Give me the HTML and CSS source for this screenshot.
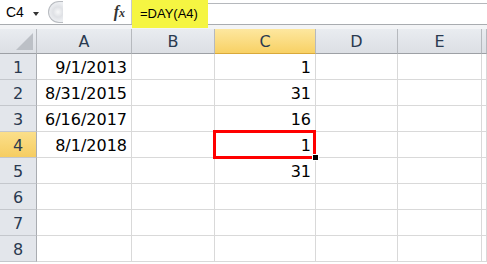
FILE: index.html
```html
<!DOCTYPE html>
<html lang="en">
<head>
    <meta charset="UTF-8">
    <title>DAY function</title>
    <link rel="stylesheet" href="styles.css">
</head>
<body>
    <div class="formula-bar">
        <div class="name-box">C4<span class="arrow"></span></div>
        <div class="knob"></div>
        <div class="fx">f<span>x</span></div>
        <div class="formula">=DAY(A4)</div>
        <div class="formula-rest"></div>
    </div>
    <div class="strip"></div>

    <div class="sheet">
        <div class="hd corner"><span class="tri"></span></div>
        <div class="hd">A</div>
        <div class="hd">B</div>
        <div class="hd active">C</div>
        <div class="hd">D</div>
        <div class="hd">E</div>
        <div class="hd"></div>

        <div class="rh">1</div><div class="c">9/1/2013</div><div class="c"></div><div class="c">1</div><div class="c"></div><div class="c"></div><div class="c"></div>
        <div class="rh">2</div><div class="c">8/31/2015</div><div class="c"></div><div class="c">31</div><div class="c"></div><div class="c"></div><div class="c"></div>
        <div class="rh">3</div><div class="c">6/16/2017</div><div class="c"></div><div class="c">16</div><div class="c"></div><div class="c"></div><div class="c"></div>
        <div class="rh active">4</div><div class="c">8/1/2018</div><div class="c"></div><div class="c selected">1<span class="handle"></span></div><div class="c"></div><div class="c"></div><div class="c"></div>
        <div class="rh">5</div><div class="c"></div><div class="c"></div><div class="c">31</div><div class="c"></div><div class="c"></div><div class="c"></div>
        <div class="rh">6</div><div class="c"></div><div class="c"></div><div class="c"></div><div class="c"></div><div class="c"></div><div class="c"></div>
        <div class="rh">7</div><div class="c"></div><div class="c"></div><div class="c"></div><div class="c"></div><div class="c"></div><div class="c"></div>
        <div class="rh">8</div><div class="c"></div><div class="c"></div><div class="c"></div><div class="c"></div><div class="c"></div><div class="c"></div>
    </div>
</body>
</html>
```

FILE: styles.css
```css
body {
    margin: 0;
    width: 487px;
    height: 264px;
    overflow: hidden;
    background: #fff;
    font-family: "DejaVu Sans", sans-serif;
}
.formula-bar {
    display: flex;
    height: 25px;
    box-sizing: border-box;
    border-bottom: 1px solid #a9acb0;
    background: #fff;
}
.name-box {
    width: 46px;
    display: flex;
    align-items: center;
    padding-left: 6px;
    box-sizing: border-box;
    font-family: "Liberation Sans", sans-serif;
    font-size: 14px;
    color: #000;
    position: relative;
}
.arrow {
    position: absolute;
    left: 33px;
    top: 12px;
    border-left: 3px solid transparent;
    border-right: 3px solid transparent;
    border-top: 4px solid #333;
}
.knob {
    width: 14px;
    margin: 1px 0 1px 2px;
    border-radius: 11px 0 0 11px;
    border: 1px solid #b9bcc1;
    border-right: none;
    background: radial-gradient(circle at 9px 10px, #f7f8f9 0, #dfe1e5 5px, #eceef1 9px);
}
.fx {
    width: 69px;
    box-sizing: border-box;
    text-align: right;
    padding-right: 6px;
    padding-top: 3px;
    font-family: "Liberation Serif", serif;
    font-style: italic;
    font-weight: bold;
    font-size: 16px;
    color: #333;
    border-right: 1px solid #c7c9cc;
}
.fx span {
    font-size: 12px;
}
.formula {
    width: 76px;
    margin-bottom: -4px;
    background: #f5f542;
    font-family: "Liberation Sans", sans-serif;
    font-size: 13px;
    padding: 6px 0 0 8px;
    box-sizing: border-box;
    color: #000;
}
.formula-rest {
    flex: 1;
    border-top: 1px solid #b5b8bc;
    margin-top: 3px;
}
.strip {
    height: 4px;
    background: #f3f4f6;
}
.sheet {
    display: grid;
    grid-template-columns: 37px 95px 83px 101px 82px 84px 5px;
    grid-template-rows: 25px repeat(8, 26px);
    font-size: 16px;
}
.hd {
    box-sizing: border-box;
    background: linear-gradient(#e9ecf0, #dcdfe4);
    border-right: 1px solid #b6b9be;
    border-bottom: 1px solid #9da0a5;
    color: #2a3a50;
    display: flex;
    align-items: center;
    justify-content: center;
    padding-top: 1px;
}
.hd.active {
    background: linear-gradient(#fde79f, #f8d165);
    border-bottom-color: #d9a93b;
}
.corner {
    position: relative;
}
.tri {
    position: absolute;
    right: 3px;
    bottom: 3px;
    border-left: 17px solid transparent;
    border-bottom: 17px solid #bcc0c6;
}
.rh {
    box-sizing: border-box;
    background: #e3e6eb;
    border-right: 1px solid #a9acb1;
    border-bottom: 1px solid #c4c7cc;
    color: #2a3a50;
    display: flex;
    align-items: center;
    justify-content: center;
    padding-top: 1px;
}
.rh.active {
    background: linear-gradient(#fbdf8a, #f6cd62);
}
.c {
    box-sizing: border-box;
    border-right: 1px solid #d9d9d9;
    border-bottom: 1px solid #d9d9d9;
    display: flex;
    align-items: center;
    justify-content: flex-end;
    padding: 1px 4px 0 0;
    color: #000;
}
.selected {
    position: relative;
}
.selected::before {
    content: "";
    position: absolute;
    left: -2px;
    top: -2px;
    right: -1px;
    bottom: -2px;
    border: 3px solid #ff0000;
}
.handle {
    position: absolute;
    right: -4px;
    bottom: -4px;
    width: 5px;
    height: 5px;
    background: #000;
    border: 1px solid #fff;
    box-sizing: content-box;
    z-index: 1;
}
```
